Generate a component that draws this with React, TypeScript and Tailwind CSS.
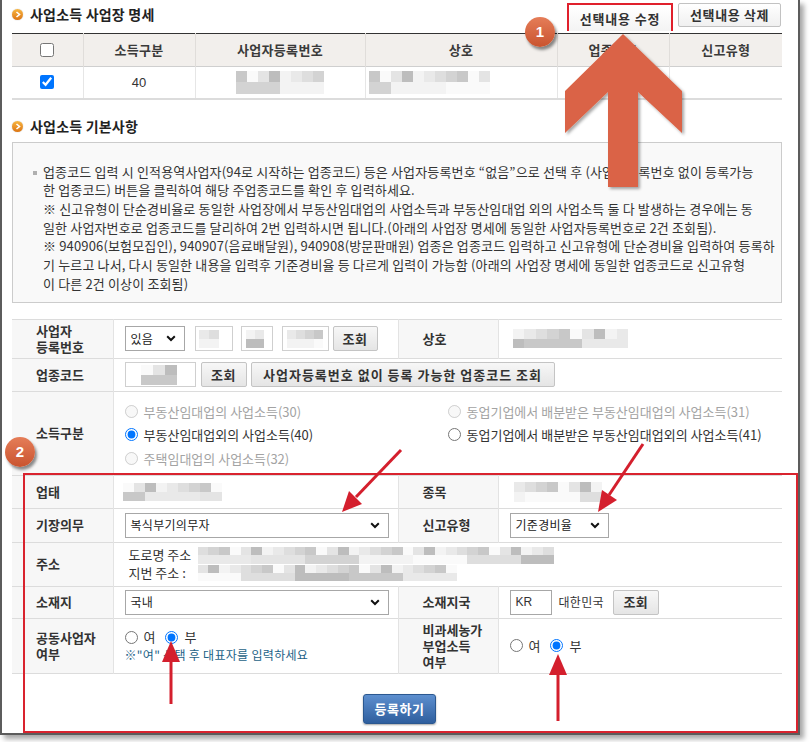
import React from 'react';

const GRAYS = [
  'bg-[#f3f3f3]',
  'bg-[#e9e9e9]',
  'bg-[#dedede]',
  'bg-[#d3d3d3]',
  'bg-[#c8c8c8]',
  'bg-[#fafafa]',
  'bg-[#e4e4e4]',
  'bg-[#bdbdbd]',
];

function shade(r: number, c: number, seed: number) {
  const v = (r * 31 + c * 17 + seed * 13 + ((r * c + seed) % 5) * 7) % GRAYS.length;
  return GRAYS[v];
}

// 모자이크 처리된 개인정보 영역
function Mosaic({ cols, rows, cell, seed = 0 }: { cols: number; rows: number; cell: string; seed?: number }) {
  return (
    <div className="flex flex-col">
      {Array.from({ length: rows }).map((_, r) => (
        <div key={r} className="flex">
          {Array.from({ length: cols }).map((_, c) => (
            <div key={c} className={`${cell} ${shade(r, c, seed)}`} />
          ))}
        </div>
      ))}
    </div>
  );
}

function Bullet() {
  return (
    <span className="w-[11px] h-[11px] rounded-full bg-linear-to-b from-[#f7b640] to-[#dc7410] flex items-center justify-center shadow-[0_0_1px_rgba(0,0,0,0.4)]">
      <svg width="6" height="7" viewBox="0 0 6 7">
        <path d="M1.5 1 L4.5 3.5 L1.5 6" stroke="white" strokeWidth="1.6" fill="none" />
      </svg>
    </span>
  );
}

function Chevron() {
  return (
    <svg width="10" height="7" viewBox="0 0 10 7">
      <path d="M1.2 1.3 L5 5 L8.8 1.3" stroke="#111" strokeWidth="2" fill="none" />
    </svg>
  );
}

function Select({ value, w }: { value: string; w: string }) {
  return (
    <div className={`${w} h-[25px] border border-[#a7a7a7] bg-white flex items-center justify-between pl-[5px] pr-[8px] text-[12px] tracking-[0.3px] text-[#222]`}>
      <span>{value}</span>
      <Chevron />
    </div>
  );
}

function GrayButton({ label, w, track = 'tracking-[0.5px]' }: { label: string; w: string; track?: string }) {
  return (
    <button
      type="button"
      className={`${w} ${track} h-[25px] border border-[#c4c4c4] rounded-[2px] bg-linear-to-b from-[#f7f7f7] to-[#e5e5e5] text-[13px] font-bold text-[#333] flex items-center justify-center whitespace-nowrap`}
    >
      {label}
    </button>
  );
}

function Radio({ checked, disabled, label }: { checked?: boolean; disabled?: boolean; label: string }) {
  return (
    <label className={`flex items-center gap-[6px] text-[13px] whitespace-nowrap ${disabled ? 'text-[#a3a3a3]' : 'text-[#333]'}`}>
      <input type="radio" defaultChecked={checked} disabled={disabled} className="w-[13px] h-[13px] m-0" />
      <span>{label}</span>
    </label>
  );
}

function Badge({ n, pos }: { n: string; pos: string }) {
  return (
    <div
      className={`absolute ${pos} w-[30px] h-[30px] rounded-full bg-linear-to-b from-[#e57d58] to-[#c9532e] shadow-[2px_3px_3px_rgba(0,0,0,0.45)] text-white font-bold text-[15px] font-['Liberation_Sans',sans-serif] flex items-center justify-center`}
    >
      {n}
    </div>
  );
}

const labelTd = 'bg-[#f7f7f7] border-r border-[#e3e3e3] pl-[24px] text-[13px] font-bold text-[#333] leading-[16px]';
const valueTd = 'pl-[11px] border-r border-[#e3e3e3]';

const NOTES = [
  '업종코드 입력 시 인적용역사업자(94로 시작하는 업종코드) 등은 사업자등록번호 “없음”으로 선택 후 (사업자등록번호 없이 등록가능',
  '한 업종코드) 버튼을 클릭하여 해당 주업종코드를 확인 후 입력하세요.',
  '※ 신고유형이 단순경비율로 동일한 사업장에서 부동산임대업의 사업소득과 부동산임대업 외의 사업소득 둘 다 발생하는 경우에는 동',
  '일한 사업자번호로 업종코드를 달리하여 2번 입력하시면 됩니다.(아래의 사업장 명세에 동일한 사업자등록번호로 2건 조회됨).',
  '※ 940906(보험모집인), 940907(음료배달원), 940908(방문판매원) 업종은 업종코드 입력하고 신고유형에 단순경비율 입력하여 등록하',
  '기 누르고 나서, 다시 동일한 내용을 입력후 기준경비율 등 다르게 입력이 가능함 (아래의 사업장 명세에 동일한 업종코드로 신고유형',
  '이 다른 2건 이상이 조회됨)',
];

export default function App() {
  return (
    <div className="min-h-screen bg-white">
      <div className="relative w-[800px] h-[735px] border-l-2 border-r-2 border-b-2 border-[#5c5c5c] shadow-[4px_4px_5px_rgba(0,0,0,0.35)] bg-white font-['Noto_Sans_CJK_KR','Noto_Sans',sans-serif] text-[#333]">
        <div className="ml-[10px] w-[770px]">
          {/* 사업장 명세 */}
          <div className="h-[33px] flex justify-between items-start">
            <div className="flex items-center gap-[7px] mt-[6px]">
              <Bullet />
              <span className="text-[14px] font-bold text-[#222] tracking-[0.2px] leading-[17px]">사업소득 사업장 명세</span>
            </div>
            <div className="flex items-start gap-[5px] pt-[3px] mr-[1px]">
              <div className="w-[106px] h-[28px] border-2 border-[#e0202c]">
                <button type="button" className="w-full h-full bg-linear-to-b from-white to-[#f3f3f3] text-[13px] font-bold text-[#333] tracking-[0.8px]">
                  선택내용 수정
                </button>
              </div>
              <button
                type="button"
                className="w-[103px] h-[24px] border border-[#c2c2c2] rounded-[2px] bg-linear-to-b from-white to-[#f0f0f0] text-[13px] font-bold text-[#333] tracking-[0.6px]"
              >
                선택내용 삭제
              </button>
            </div>
          </div>

          <table className="w-[770px] table-fixed border-collapse">
            <colgroup>
              <col className="w-[71px]" />
              <col className="w-[112px]" />
              <col className="w-[170px]" />
              <col className="w-[192px]" />
              <col className="w-[112px]" />
              <col className="w-[113px]" />
            </colgroup>
            <thead>
              <tr className="h-[33px] bg-[#f2efec] border-t border-[#333] border-b border-b-[#cfcfcf] text-[13px] font-bold text-[#3a3a3a] tracking-[0.3px]">
                <th className="p-0">
                  <div className="flex justify-center">
                    <input type="checkbox" className="w-[14px] h-[14px] m-0" />
                  </div>
                </th>
                <th className="p-0 font-bold border-l border-[#e0ddda]">소득구분</th>
                <th className="p-0 font-bold border-l border-[#e0ddda]">사업자등록번호</th>
                <th className="p-0 font-bold border-l border-[#e0ddda]">상호</th>
                <th className="p-0 font-bold border-l border-[#e0ddda]">업종코드</th>
                <th className="p-0 font-bold border-l border-[#e0ddda]">신고유형</th>
              </tr>
            </thead>
            <tbody>
              <tr className="h-[32px] border-b-2 border-[#dcdcdc] text-[13px]">
                <td className="p-0">
                  <div className="flex justify-center">
                    <input type="checkbox" defaultChecked className="w-[14px] h-[14px] m-0" />
                  </div>
                </td>
                <td className="p-0 text-center border-l border-[#e6e6e6] font-['Liberation_Sans',sans-serif]">40</td>
                <td className="p-0 border-l border-[#e6e6e6]">
                  <div className="flex justify-center">
                    <Mosaic cols={8} rows={2} cell="w-[11px] h-[11.5px]" seed={1} />
                  </div>
                </td>
                <td className="p-0 border-l border-[#e6e6e6]">
                  <div className="flex pl-[3px]">
                    <Mosaic cols={11} rows={2} cell="w-[11px] h-[11.5px]" seed={3} />
                  </div>
                </td>
                <td className="p-0 border-l border-[#e6e6e6]" />
                <td className="p-0 border-l border-[#e6e6e6]" />
              </tr>
            </tbody>
          </table>

          {/* 기본사항 */}
          <div className="mt-[18px] h-[17px] flex items-center gap-[7px]">
            <Bullet />
            <span className="text-[14px] font-bold text-[#222] tracking-[0.2px] leading-[17px]">사업소득 기본사항</span>
          </div>

          <div className="mt-[7px] h-[161px] border border-[#cccccc] bg-[#f9f9f9] pt-[20px] pl-[30px] text-[13px] leading-[18.7px] tracking-[0.15px] text-[#333]">
            {NOTES.map((line, i) => (
              <div key={i} className="relative whitespace-nowrap">
                {i === 0 && <span className="absolute left-[-10px] top-[8px] w-[4px] h-[4px] bg-[#b0b0b0]" />}
                {line}
              </div>
            ))}
          </div>

          {/* 입력 폼 */}
          <table className="mt-[16px] w-[770px] table-fixed border-collapse text-[12px]">
            <colgroup>
              <col className="w-[101px]" />
              <col className="w-[285px]" />
              <col className="w-[100px]" />
              <col className="w-[284px]" />
            </colgroup>
            <tbody>
              <tr className="h-[39px] border-t border-b border-[#dcdcdc]">
                <td className={labelTd}>
                  사업자
                  <br />
                  등록번호
                </td>
                <td className={valueTd}>
                  <div className="flex items-center">
                    <Select value="있음" w="w-[60px]" />
                    <div className="ml-[10px] w-[38px] h-[25px] border border-[#cfcfcf] flex items-center pl-[3px]">
                      <Mosaic cols={2} rows={2} cell="w-[10px] h-[9px]" seed={5} />
                    </div>
                    <div className="ml-[8px] w-[32px] h-[25px] border border-[#cfcfcf] flex items-center pl-[4px]">
                      <Mosaic cols={2} rows={2} cell="w-[9px] h-[9px]" seed={2} />
                    </div>
                    <div className="ml-[9px] w-[47px] h-[25px] border border-[#cfcfcf] flex items-center pl-[4px]">
                      <Mosaic cols={4} rows={2} cell="w-[9px] h-[9px]" seed={7} />
                    </div>
                    <div className="ml-[4px]">
                      <GrayButton label="조회" w="w-[45px]" />
                    </div>
                  </div>
                </td>
                <td className={labelTd}>상호</td>
                <td className="pl-[14px]">
                  <Mosaic cols={10} rows={2} cell="w-[11.6px] h-[9.5px]" seed={4} />
                </td>
              </tr>

              <tr className="h-[33px] border-b border-[#dcdcdc]">
                <td className={labelTd}>업종코드</td>
                <td colSpan={3} className="pl-[11px]">
                  <div className="flex items-center">
                    <div className="w-[71px] h-[25px] border border-[#cfcfcf] flex items-center pl-[15px]">
                      <Mosaic cols={3} rows={2} cell="w-[12px] h-[10px]" seed={6} />
                    </div>
                    <div className="ml-[5px]">
                      <GrayButton label="조회" w="w-[46px]" />
                    </div>
                    <div className="ml-[4px]">
                      <GrayButton label="사업자등록번호 없이 등록 가능한 업종코드 조회" w="w-[304px]" track="tracking-[1px]" />
                    </div>
                  </div>
                </td>
              </tr>

              <tr className="h-[84px] border-b border-[#dcdcdc]">
                <td className={labelTd}>소득구분</td>
                <td colSpan={3} className="pl-[11px] align-top pt-[8px]">
                  <div className="grid grid-cols-[323px_1fr] auto-rows-[23.5px] items-center">
                    <Radio disabled label="부동산임대업의 사업소득(30)" />
                    <Radio disabled label="동업기업에서 배분받은 부동산임대업의 사업소득(31)" />
                    <Radio checked label="부동산임대업외의 사업소득(40)" />
                    <Radio label="동업기업에서 배분받은 부동산임대업외의 사업소득(41)" />
                    <Radio disabled label="주택임대업의 사업소득(32)" />
                  </div>
                </td>
              </tr>

              <tr className="h-[33px] border-b border-[#dcdcdc]">
                <td className={labelTd}>업태</td>
                <td className="pl-[9px] border-r border-[#e3e3e3]">
                  <Mosaic cols={9} rows={2} cell="w-[11px] h-[9px]" seed={8} />
                </td>
                <td className={labelTd}>종목</td>
                <td className="pl-[15px]">
                  <Mosaic cols={8} rows={2} cell="w-[11px] h-[10px]" seed={9} />
                </td>
              </tr>

              <tr className="h-[34px] border-b border-[#dcdcdc]">
                <td className={labelTd}>기장의무</td>
                <td className={valueTd}>
                  <Select value="복식부기의무자" w="w-[264px]" />
                </td>
                <td className={labelTd}>신고유형</td>
                <td className="pl-[11px]">
                  <Select value="기준경비율" w="w-[99px]" />
                </td>
              </tr>

              <tr className="h-[44px] border-b border-[#dcdcdc]">
                <td className={labelTd}>주소</td>
                <td colSpan={3} className="pl-[15px] text-[13px] leading-[18px]">
                  <div className="flex items-center">
                    <span className="w-[69px] whitespace-nowrap">도로명 주소</span>
                    <Mosaic cols={33} rows={2} cell="w-[10.8px] h-[8.5px]" seed={10} />
                  </div>
                  <div className="flex items-center">
                    <span className="w-[69px] whitespace-nowrap">지번 주소 :</span>
                    <Mosaic cols={24} rows={2} cell="w-[10.8px] h-[8px]" seed={11} />
                  </div>
                </td>
              </tr>

              <tr className="h-[32px] border-b border-[#dcdcdc]">
                <td className={labelTd}>소재지</td>
                <td className={valueTd}>
                  <Select value="국내" w="w-[264px]" />
                </td>
                <td className={labelTd}>소재지국</td>
                <td className="pl-[11px]">
                  <div className="flex items-center">
                    <div className="w-[42px] h-[25px] border border-[#a7a7a7] flex items-center pl-[5px] font-['Liberation_Sans',sans-serif] text-[12px]">
                      KR
                    </div>
                    <span className="ml-[7px] text-[12px] tracking-[0.3px]">대한민국</span>
                    <div className="ml-[9px]">
                      <GrayButton label="조회" w="w-[46px]" />
                    </div>
                  </div>
                </td>
              </tr>

              <tr className="h-[55px] border-b border-[#dcdcdc]">
                <td className={labelTd}>
                  공동사업자
                  <br />
                  여부
                </td>
                <td className={valueTd}>
                  <div className="flex items-center gap-[10px] h-[17px]">
                    <Radio label="여" />
                    <Radio checked label="부" />
                  </div>
                  <div className="text-[12px] text-[#1d6287] leading-[17px] tracking-[0.3px]">※"여" 선택 후 대표자를 입력하세요</div>
                </td>
                <td className={labelTd}>
                  비과세농가
                  <br />
                  부업소득
                  <br />
                  여부
                </td>
                <td className="pl-[11px]">
                  <div className="flex items-center gap-[10px]">
                    <Radio label="여" />
                    <Radio checked label="부" />
                  </div>
                </td>
              </tr>
            </tbody>
          </table>

          <div className="mt-[20px] flex justify-center pl-[5px]">
            <button
              type="button"
              className="w-[73px] h-[30px] rounded-[3px] border border-[#2b5890] bg-linear-to-b from-[#5d8fcf] to-[#2f5f9e] text-white text-[13px] font-bold tracking-[0.5px] shadow-[0_1px_2px_rgba(0,0,0,0.35)]"
            >
              등록하기
            </button>
          </div>
        </div>

        {/* 주석: 강조 박스, 번호, 화살표 */}
        <div className="absolute left-[21px] top-[473px] w-[775px] h-[260px] border-2 border-[#d9232e] pointer-events-none" />
        <Badge n="1" pos="left-[523px] top-[17px]" />
        <Badge n="2" pos="left-[3px] top-[437px]" />

        <svg className="absolute left-[-2px] top-0 pointer-events-none" width="800" height="735" viewBox="0 0 800 735">
          <defs>
            <filter id="sh" x="-20%" y="-20%" width="140%" height="140%">
              <feDropShadow dx="2" dy="2" stdDeviation="1.5" floodColor="#000" floodOpacity="0.35" />
            </filter>
          </defs>
          <polygon
            points="623,34 565,91 565,133 608,92 608,187 638,187 638,92 682,133 682,91"
            fill="#da6446"
            filter="url(#sh)"
          />
          <g stroke="#d41f2d" strokeWidth="3" fill="#d41f2d">
            <line x1="401" y1="450" x2="356" y2="497" />
            <polygon points="342,512 362,504 349,491" stroke="none" />
            <line x1="643" y1="444" x2="609" y2="495" />
            <polygon points="598,512 617,500 602,490" stroke="none" />
            <line x1="171" y1="704" x2="171" y2="660" />
            <polygon points="171,641 162,662 180,662" stroke="none" />
            <line x1="558" y1="721" x2="558" y2="673" />
            <polygon points="558,654 549,675 567,675" stroke="none" />
          </g>
        </svg>
      </div>
    </div>
  );
}
